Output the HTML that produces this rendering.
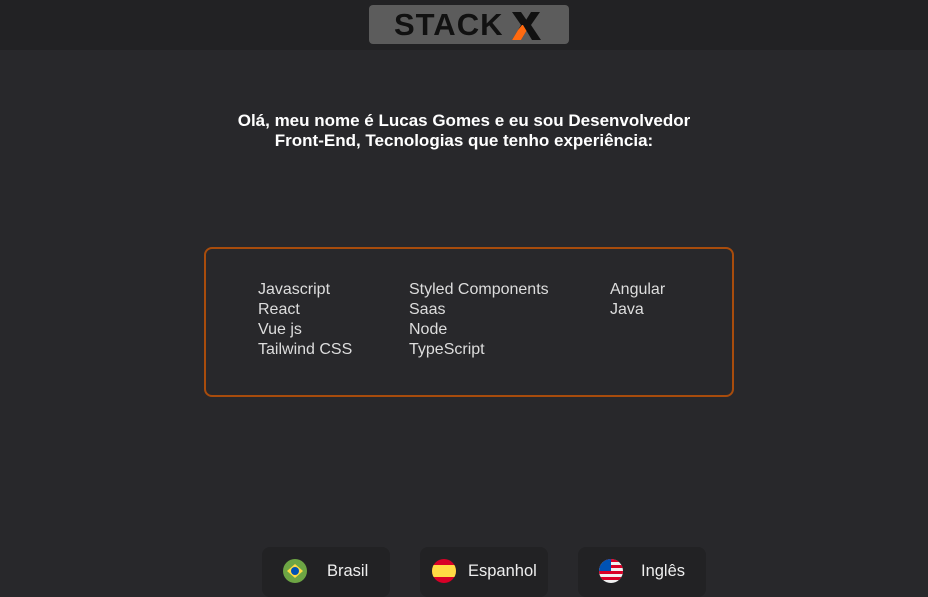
<!DOCTYPE html>
<html><head><style>
*{margin:0;padding:0;box-sizing:border-box}
body{width:928px;height:591px;background:#28282b;font-family:"Liberation Sans",sans-serif;position:relative;overflow:hidden}
.hdr{position:absolute;left:0;top:0;width:928px;height:50px;background:#222224}
.logo{position:absolute;left:369px;top:5px;width:200px;height:39px;background:#5c5c5c;border-radius:4px;font-weight:bold;font-size:31px;color:#111;letter-spacing:1px;padding-left:25px;line-height:40px}
h1{position:absolute;left:0;width:928px;top:111px;text-align:center;color:#fff;font-size:17px;line-height:20px;font-weight:bold}
.box{position:absolute;left:204px;top:247px;width:530px;height:150px;border:2px solid #a84c0c;border-radius:8px}
.col{position:absolute;top:31px;color:#ddd;font-size:16px;line-height:20px}
.btn{position:absolute;top:547px;width:128px;height:50px;background:#222224;border-radius:8px;color:#eee;font-size:16.5px}
.btn svg{position:absolute;left:21px;top:12px}
.btn span{position:absolute;top:15px}
</style></head><body>
<div class="hdr"></div>
<div class="logo">STACK<svg width="34" height="28" viewBox="0 0 34 28" style="position:absolute;left:141px;top:7px"><path d="M2 0h9l9 13-9 15H2l9-15z" fill="#111"/><path d="M8 18l4-5h8l-9 15H2z" fill="#ff6a10"/><path d="M13 13L21 0h9l-9 13 10 15h-9z" fill="#111"/></svg></div>
<h1>Olá, meu nome é Lucas Gomes e eu sou Desenvolvedor<br>Front-End, Tecnologias que tenho experiência:</h1>
<div class="box">
<div class="col" style="left:52px">Javascript<br>React<br>Vue js<br>Tailwind CSS</div>
<div class="col" style="left:203px">Styled Components<br>Saas<br>Node<br>TypeScript</div>
<div class="col" style="left:404px">Angular<br>Java</div>
</div>
<div class="btn" style="left:262px"><svg width="24" height="24" viewBox="0 0 24 24"><circle cx="12" cy="12" r="12" fill="#6da544"/><path d="M12 5l8 7-8 7-8-7z" fill="#ffda44"/><circle cx="12" cy="12" r="4" fill="#0052b4"/></svg><span style="left:65px">Brasil</span></div>
<div class="btn" style="left:420px"><svg width="24" height="24" viewBox="0 0 24 24" style="left:12px"><clipPath id="c"><circle cx="12" cy="12" r="12"/></clipPath><g clip-path="url(#c)"><rect width="24" height="24" fill="#d80027"/><rect y="6" width="24" height="12" fill="#ffda44"/></g></svg><span style="left:48px">Espanhol</span></div>
<div class="btn" style="left:578px"><svg width="24" height="24" viewBox="0 0 24 24"><clipPath id="d"><circle cx="12" cy="12" r="12"/></clipPath><g clip-path="url(#d)"><rect width="24" height="24" fill="#f0f0f0"/><rect y="0" width="24" height="3" fill="#d80027"/><rect y="6" width="24" height="3" fill="#d80027"/><rect y="12" width="24" height="3" fill="#d80027"/><rect y="18" width="24" height="3" fill="#d80027"/><rect width="12" height="12" fill="#0052b4"/></g></svg><span style="left:63px">Inglês</span></div>
</body></html>
